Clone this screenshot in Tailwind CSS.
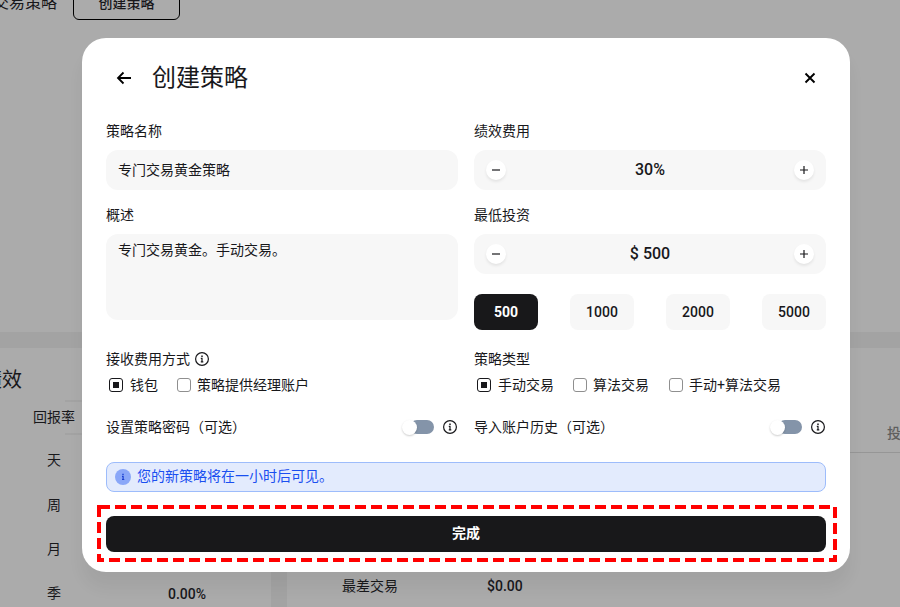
<!DOCTYPE html>
<html lang="zh">
<head>
  <meta charset="UTF-8" />
  <title>创建策略</title>
  <script src="https://cdn.jsdelivr.net/npm/@tailwindcss/browser@4"></script>
</head>
<body class="bg-[#ababab] text-[#18181b] font-['Roboto','Noto_Sans_CJK_SC',sans-serif]">
  <div class="relative w-[900px] h-[607px] overflow-hidden">

    <!-- Page behind the overlay -->
    <div class="h-[20px] flex items-end">
      <div class="w-[57px] h-[20px] shrink-0 overflow-hidden flex justify-end"><span class="text-[16px] leading-[20px] -mt-[7px] whitespace-nowrap">交易策略</span></div>
      <div class="w-[107px] ml-[16px] h-[34px] shrink-0 border border-black rounded-[6px] flex items-center justify-center text-[14px] font-medium">创建策略</div>
    </div>
    <div class="mt-[312px] h-[16px] bg-[#a3a3a3]"></div>
    <div class="absolute left-[-18px] top-[367px] text-[20px] leading-[26px] whitespace-nowrap">绩效</div>
    <div class="absolute left-[65px] top-[400px] w-[20px] h-[35px] border-y-2 border-[#a3a3a3]"></div>
    <div class="absolute left-[32px] top-[407px] w-[44px] flex flex-col items-center text-[14px]">
      <span class="h-[20px] leading-[20px]">回报率</span>
      <span class="mt-[23px] h-[20px] leading-[20px]">天</span>
      <span class="mt-[25px] h-[20px] leading-[20px]">周</span>
      <span class="mt-[24px] h-[20px] leading-[20px]">月</span>
      <span class="mt-[24px] h-[20px] leading-[20px]">季</span>
    </div>
    <div class="absolute left-[168px] top-[584px] text-[14px] leading-[20px] font-medium">0.00%</div>
    <div class="absolute left-[271px] top-[572px] w-[16px] h-[35px] bg-[#a3a3a3]"></div>
    <div class="absolute left-[342px] top-[576px] text-[14px] leading-[20px]">最差交易</div>
    <div class="absolute left-[487px] top-[576px] text-[14px] leading-[20px] font-medium">$0.00</div>
    <div class="absolute left-[887px] top-[423px] text-[14px] leading-[20px] font-medium text-[#5f5f5f] whitespace-nowrap">投资</div>
    <div class="absolute left-[850px] top-[452px] w-[50px] h-px bg-[#969696]"></div>

    <!-- Modal -->
    <div class="absolute left-[82px] top-[38px] w-[768px] h-[534px] bg-white rounded-[24px] shadow-[0_16px_16px_rgba(0,0,0,0.05)] px-[24px]">
      <div class="h-[80px] flex items-center pl-[9px] pr-[10px]">
        <svg class="w-[18px] h-[18px]" viewBox="0 0 18 18" fill="none" stroke="#000" stroke-width="1.8"><path d="M16 9H3M8.500 3.500 3 9l5.500 5.500"/></svg>
        <h1 class="ml-[19px] text-[24px] leading-[32px] font-normal">创建策略</h1>
        <svg class="ml-auto w-[12px] h-[12px]" viewBox="0 0 12 12" fill="none" stroke="#000" stroke-width="1.900"><path d="M1.500 1.500l9 9M10.500 1.500l-9 9"/></svg>
      </div>

      <div class="grid grid-cols-2 gap-x-[16px]">
        <div>
          <div class="mt-[3px] text-[14px] leading-[20px]">策略名称</div>
          <div class="mt-[9px] h-[40px] bg-[#f7f7f7] rounded-[12px] px-[12px] flex items-center text-[14px]">专门交易黄金策略</div>
          <div class="mt-[15px] text-[14px] leading-[20px]">概述</div>
          <div class="mt-[9px] h-[86px] bg-[#f7f7f7] rounded-[12px] px-[12px] py-[6px] text-[14px] leading-[20px]">专门交易黄金。手动交易。</div>
        </div>
        <div>
          <div class="mt-[3px] text-[14px] leading-[20px]">绩效费用</div>
          <div class="mt-[9px] h-[40px] bg-[#f7f7f7] rounded-[12px] px-[12px] flex items-center justify-between">
            <button class="w-[20px] h-[20px] rounded-full bg-white shadow-[0_2px_3px_rgba(0,0,0,0.08)] flex items-center justify-center"><svg class="w-[10px] h-[10px]" viewBox="0 0 10 10" stroke="#18181b" stroke-width="1.200"><path d="M1 5h8"/></svg></button>
            <span class="text-[16px] font-medium">30%</span>
            <button class="w-[20px] h-[20px] rounded-full bg-white shadow-[0_2px_3px_rgba(0,0,0,0.08)] flex items-center justify-center"><svg class="w-[10px] h-[10px]" viewBox="0 0 10 10" stroke="#18181b" stroke-width="1.200"><path d="M1 5h8M5 1v8"/></svg></button>
          </div>
          <div class="mt-[15px] text-[14px] leading-[20px]">最低投资</div>
          <div class="mt-[9px] h-[40px] bg-[#f7f7f7] rounded-[12px] px-[12px] flex items-center justify-between">
            <button class="w-[20px] h-[20px] rounded-full bg-white shadow-[0_2px_3px_rgba(0,0,0,0.08)] flex items-center justify-center"><svg class="w-[10px] h-[10px]" viewBox="0 0 10 10" stroke="#18181b" stroke-width="1.200"><path d="M1 5h8"/></svg></button>
            <span class="text-[16px] font-medium">$ 500</span>
            <button class="w-[20px] h-[20px] rounded-full bg-white shadow-[0_2px_3px_rgba(0,0,0,0.08)] flex items-center justify-center"><svg class="w-[10px] h-[10px]" viewBox="0 0 10 10" stroke="#18181b" stroke-width="1.200"><path d="M1 5h8M5 1v8"/></svg></button>
          </div>
          <div class="mt-[20px] flex justify-between text-[14px] font-medium">
            <button class="w-[64px] h-[36px] rounded-[8px] bg-[#18181a] text-white font-bold">500</button>
            <button class="w-[64px] h-[36px] rounded-[8px] bg-[#f7f7f7]">1000</button>
            <button class="w-[64px] h-[36px] rounded-[8px] bg-[#f7f7f7]">2000</button>
            <button class="w-[64px] h-[36px] rounded-[8px] bg-[#f7f7f7]">5000</button>
          </div>
        </div>
      </div>

      <div class="grid grid-cols-2 gap-x-[16px] text-[14px]">
        <div>
          <div class="mt-[19px] h-[20px] leading-[20px] flex items-center gap-[4px]">接收费用方式
            <svg class="w-[16px] h-[16px]" viewBox="0 0 16 16" fill="none" stroke="#18181b" stroke-width="1.200"><circle cx="8" cy="8" r="6.400"/><path d="M6.800 7.400H8v3.400M6.800 10.800h2.500"/><path d="M8 4.600v1.300" stroke-width="1.500"/></svg>
          </div>
          <div class="mt-[6px] h-[20px] flex items-center pl-[3px]">
            <span class="w-[14px] h-[14px] rounded-[3px] border-[1.500px] border-[#18181b] flex items-center justify-center"><span class="w-[6px] h-[6px] bg-[#18181b]"></span></span>
            <span class="ml-[7px]">钱包</span>
            <span class="ml-[19px] w-[14px] h-[14px] rounded-[3px] border border-[#8f8f8f]"></span>
            <span class="ml-[6px]">策略提供经理账户</span>
          </div>
          <div class="mt-[22px] h-[20px] flex items-center">设置策略密码（可选）
            <span class="ml-auto relative w-[32px] h-[15px] mr-[8px]">
              <span class="absolute right-0 top-0 w-[24px] h-[14px] rounded-full bg-[#8494a9]"></span>
              <span class="absolute left-0 top-0 w-[15px] h-[15px] rounded-full bg-white shadow-[0_1px_2px_rgba(0,0,0,0.2)]"></span>
            </span>
            <svg class="w-[16px] h-[16px]" viewBox="0 0 16 16" fill="none" stroke="#18181b" stroke-width="1.200"><circle cx="8" cy="8" r="6.400"/><path d="M6.800 7.400H8v3.400M6.800 10.800h2.500"/><path d="M8 4.600v1.300" stroke-width="1.500"/></svg>
          </div>
        </div>
        <div>
          <div class="mt-[19px] h-[20px] leading-[20px]">策略类型</div>
          <div class="mt-[6px] h-[20px] flex items-center pl-[3px]">
            <span class="w-[14px] h-[14px] rounded-[3px] border-[1.500px] border-[#18181b] flex items-center justify-center"><span class="w-[6px] h-[6px] bg-[#18181b]"></span></span>
            <span class="ml-[7px]">手动交易</span>
            <span class="ml-[19px] w-[14px] h-[14px] rounded-[3px] border border-[#8f8f8f]"></span>
            <span class="ml-[6px]">算法交易</span>
            <span class="ml-[20px] w-[14px] h-[14px] rounded-[3px] border border-[#8f8f8f]"></span>
            <span class="ml-[6px]">手动+算法交易</span>
          </div>
          <div class="mt-[22px] h-[20px] flex items-center">导入账户历史（可选）
            <span class="ml-auto relative w-[32px] h-[15px] mr-[8px]">
              <span class="absolute right-0 top-0 w-[24px] h-[14px] rounded-full bg-[#8494a9]"></span>
              <span class="absolute left-0 top-0 w-[15px] h-[15px] rounded-full bg-white shadow-[0_1px_2px_rgba(0,0,0,0.2)]"></span>
            </span>
            <svg class="w-[16px] h-[16px]" viewBox="0 0 16 16" fill="none" stroke="#18181b" stroke-width="1.200"><circle cx="8" cy="8" r="6.400"/><path d="M6.800 7.400H8v3.400M6.800 10.800h2.500"/><path d="M8 4.600v1.300" stroke-width="1.500"/></svg>
          </div>
        </div>
      </div>

      <div class="mt-[25px] h-[30px] rounded-[8px] border border-[#9dbcfb] bg-[#e3ebfd] flex items-center px-[8px] text-[14px] text-[#1a4ff0]">
        <span class="w-[16px] h-[16px] rounded-full bg-[#8aa7f8] flex items-center justify-center">
          <svg class="w-[10px] h-[10px]" viewBox="0 0 10 10" fill="none" stroke="#1a3fd0" stroke-width="1.200"><path d="M4 4.300h1.100v3.200M4 7.500h2.300"/><path d="M5 1.800v1.200" stroke-width="1.400"/></svg>
        </span>
        <span class="ml-[6px] pb-[2px]">您的新策略将在一小时后可见。</span>
      </div>

      <div class="relative mt-[24px]">
        <button class="w-full h-[36px] pb-[2px] rounded-[8px] bg-[#18181a] text-white text-[14px] font-bold">完成</button>
        <svg class="absolute -left-[9px] -top-[11px] w-[740px] h-[57px]" viewBox="0 0 740 57" fill="none"><rect x="2" y="2" width="736" height="53" stroke="#ff0000" stroke-width="4" stroke-dasharray="11 5"/></svg>
      </div>
    </div>
  </div>
</body>
</html>
